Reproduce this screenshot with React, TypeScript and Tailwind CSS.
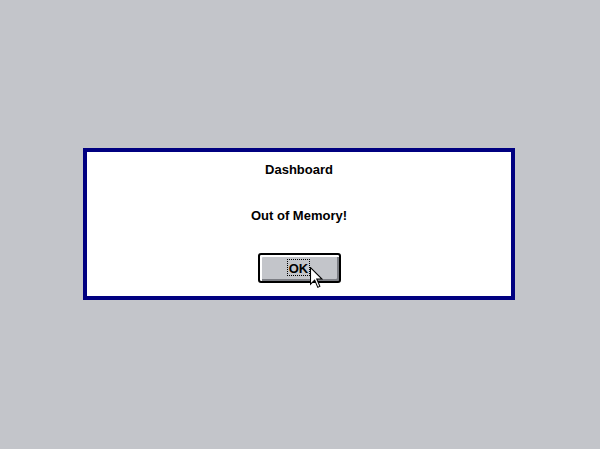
import React from "react";

export default function App() {
  return (
    <div
      className="w-[600px] h-[449px] bg-[#c3c5ca] flex items-center justify-center"
      style={{ fontFamily: '"Liberation Sans", Arial, sans-serif' }}
    >
      <div className="w-[432px] h-[152px] border-4 border-[#000080] bg-white flex flex-col items-center pt-[10px] mt-[-1px] ml-[-2px]">
        <div className="text-[13px] leading-[16px] font-bold text-black">Dashboard</div>
        <div className="mt-[30px] text-[13px] leading-[16px] font-bold text-black">Out of Memory!</div>
        <div className="relative mt-[29px] w-[83px] h-[30px] border-2 border-black rounded-[3px] bg-[#c3c5ca] shadow-[inset_2px_2px_0_#ffffff,inset_-2px_-2px_0_#7c7e84] flex items-center justify-center">
          <span className="border border-dotted border-black px-[1px] pt-[2px] text-[13px] leading-[13px] font-bold text-black ml-[-1px] mt-[-2px]">
            OK
          </span>
          <svg
            className="absolute left-[50px] top-[12px]"
            width="13"
            height="22"
            viewBox="0 0 12.5 21"
          >
            <path
              d="M0.5 0.5 L0.5 16.5 L4.5 12.5 L7.5 19.5 L9.5 18.5 L6.5 11.5 L11.5 11.5 Z"
              fill="#ffffff"
              stroke="#000000"
              strokeWidth="1"
              strokeLinejoin="miter"
            />
          </svg>
        </div>
      </div>
    </div>
  );
}
